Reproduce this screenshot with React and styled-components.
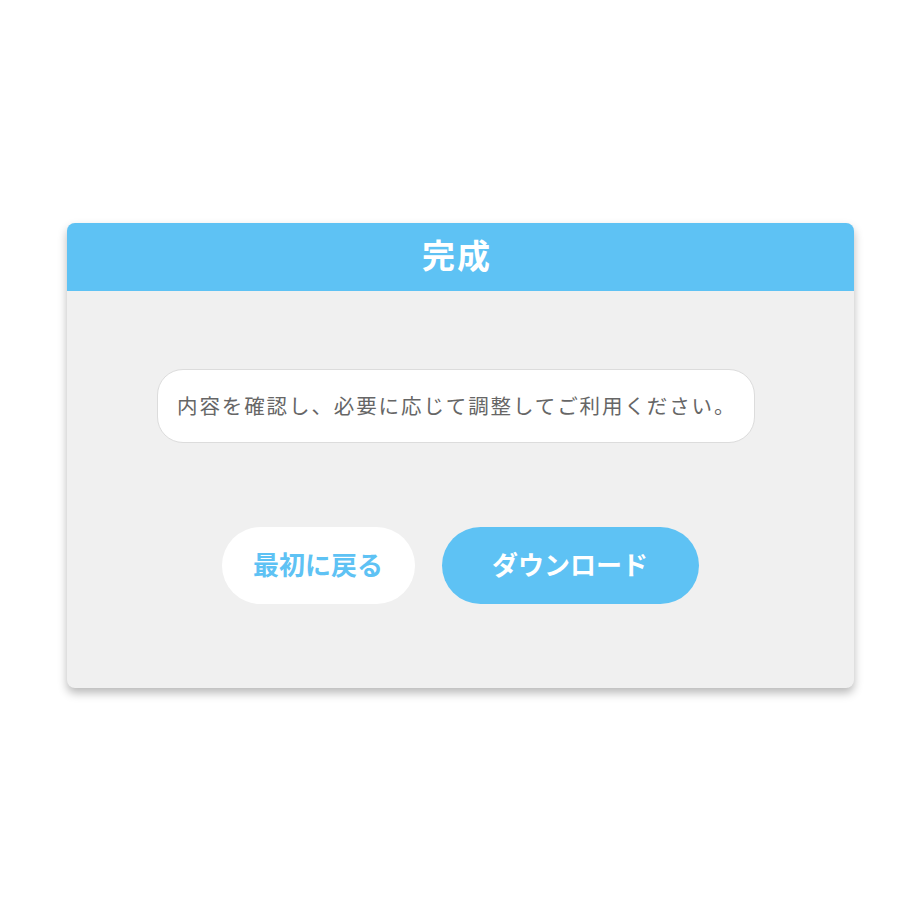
import React from 'react';
import styled, {createGlobalStyle} from 'styled-components';

const GlobalStyle = createGlobalStyle`
    html, body {
        margin: 0;
        padding: 0;
        background: #fff;
        font-family: "Noto Sans CJK JP", "Noto Sans", sans-serif;
    }
`;

export default function App() {
    return (
        <Page>
            <GlobalStyle />
            <Card>
                <Header>完成</Header>
                <Body>
                    <Message>内容を確認し、必要に応じて調整してご利用ください。</Message>
                    <Actions>
                        <Button>最初に戻る</Button>
                        <Button primary>ダウンロード</Button>
                    </Actions>
                </Body>
            </Card>
        </Page>
    );
}

const Page = styled.div`
    width: 920px;
    height: 920px;
    display: flex;
    justify-content: center;
    align-items: flex-start;
    padding-top: 223px;
    box-sizing: border-box;
`;

const Card = styled.div`
    width: 787px;
    background: #f0f0f0;
    border-radius: 8px;
    overflow: hidden;
    box-shadow: 0 5px 10px rgba(0, 0, 0, 0.28);
`;

const Header = styled.div`
    height: 68px;
    box-sizing: border-box;
    padding: 0 6px 6px 0;
    background: #5ec2f4;
    color: #fff;
    font-size: 33px;
    font-weight: 700;
    letter-spacing: 2px;
    display: flex;
    align-items: center;
    justify-content: center;
`;

const Body = styled.div`
    display: flex;
    flex-direction: column;
    align-items: center;
    padding: 78px 0 84px;
    gap: 84px;
`;

const Message = styled.div`
    width: 598px;
    height: 74px;
    box-sizing: border-box;
    margin-left: -8px;
    background: #fff;
    border: 1px solid #dcdcdc;
    border-radius: 26px;
    padding: 0 19px 3px;
    display: flex;
    align-items: center;
    font-size: 20.5px;
    letter-spacing: 1.9px;
    color: #666;
    white-space: nowrap;
`;

const Actions = styled.div`
    display: flex;
    gap: 27px;
`;

const Button = styled.button`
    width: ${p => (p.primary ? '257px' : '193px')};
    height: 77px;
    border: none;
    border-radius: 39px;
    padding: 0 0 5px;
    background: ${p => (p.primary ? '#5ec2f4' : '#fff')};
    color: ${p => (p.primary ? '#fff' : '#5ec2f4')};
    font-family: inherit;
    font-size: 26px;
    font-weight: 700;
    cursor: pointer;
`;
